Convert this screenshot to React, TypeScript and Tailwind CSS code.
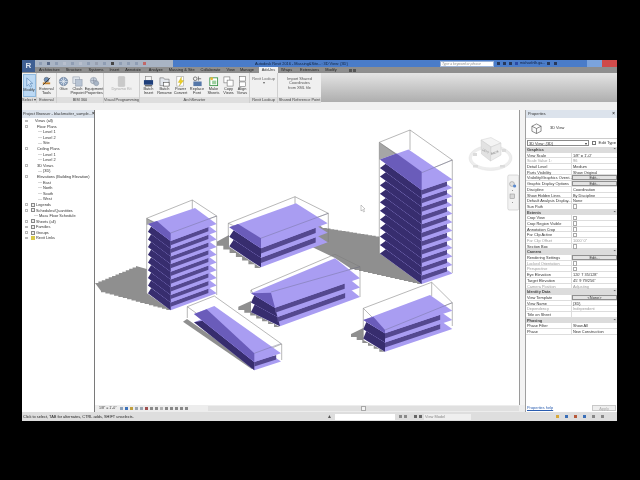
import React from "react";

type Pt = [number, number];
const S = (p: Pt[]) => p.map((q) => q.map((v) => v.toFixed(1)).join(",")).join(" ");
const LIGHT = "#a99df2";
const MED = "#6a5cba";
const NAVY = "#372d6e";
const STRIPE = "#54488f";
const GRAY = "#8f8f8f";
const WIRE = "#7d7d7d";

function stairs(a: Pt, b: Pt, n: number): Pt[] {
  const out: Pt[] = [];
  for (let i = 0; i < n; i++) {
    const x1 = a[0] + ((b[0] - a[0]) * i) / n;
    const y1 = a[1] + ((b[1] - a[1]) * i) / n;
    const x2 = a[0] + ((b[0] - a[0]) * (i + 1)) / n;
    const y2 = a[1] + ((b[1] - a[1]) * (i + 1)) / n;
    out.push([x1, y1], [x2, y1], [x2, y2]);
  }
  return out;
}

function Building(props: {
  L: Pt; B: Pt; R: Pt; F: Pt; h: number; n: number;
  s1: Pt; s2: Pt; wire: Pt[][]; over: Pt[][]; dF?: number; fill?: Pt[];
}) {
  const { L, B, R, F, h, n, s1, s2, wire, over, dF = 0, fill } = props;
  const plates = [];
  for (let k = n - 1; k >= 0; k--) {
    const o = k * h;
    const f: Pt = [F[0] + k * dF, F[1] + o];
    const l: Pt = [L[0], L[1] + o];
    const r: Pt = [R[0], R[1] + o];
    const b: Pt = [B[0], B[1] + o];
    const fu: Pt = [f[0] - dF, f[1] - h];
    const lu: Pt = [l[0], l[1] - h];
    const ru: Pt = [r[0], r[1] - h];
    const notch: Pt = [lu[0] + (fu[0] - lu[0]) * 0.14, lu[1] + (fu[1] - lu[1]) * 0.14];
    const e: Pt = [fu[0] + (ru[0] - fu[0]) * 0.82, fu[1] + (ru[1] - fu[1]) * 0.82];
    plates.push(
      <g key={k}>
        <polygon points={S([l, b, r, f])} fill={LIGHT} />
        {k > 0 && <polygon points={S([l, notch, fu, f])} fill={NAVY} />}
        {k > 0 && (
          <polygon
            points={S([fu, e, [e[0], e[1] + h * 0.55], [fu[0], fu[1] + h * 0.55]])}
            fill={STRIPE}
          />
        )}
      </g>
    );
  }
  return (
    <g>
      {fill && <polygon points={S(fill)} fill="#a6a6a6" />}
      {wire.map((w, i) => (
        <polyline key={i} points={S(w)} fill="none" stroke={WIRE} strokeWidth="0.55" />
      ))}
      {plates}
      <polygon points={S([L, s1, s2, F])} fill={MED} />
      {over.map((w, i) => (
        <polyline key={i} points={S(w)} fill="none" stroke="#6a6a8a" strokeWidth="0.4" />
      ))}
    </g>
  );
}

function Model() {
  const shadowA: Pt[] = [
    ...stairs([95, 283], [136, 266], 12),
    [146.7, 269], [146.7, 293], [170.7, 310],
    ...stairs([170.7, 310], [101, 291], 16),
  ];
  const shadowB: Pt[] = [[216.7, 241.7], [229, 235], [229, 246.7], [261, 268], ...stairs([261, 268], [217, 242], 7)];
  const shadowC: Pt[] = [
    [318, 224],
    ...stairs([323, 228], [379.5, 237], 15),
    [379.5, 253], [421.7, 284],
    ...stairs([421.7, 284], [350, 268], 16),
    [335, 258], [310, 246],
  ];
  const shadowD: Pt[] = [[238.3, 306.7], [251, 301], [251, 312], [280, 327], ...stairs([280, 327], [238.3, 307], 7)];
  const shadowE: Pt[] = [[183, 321.7], [187, 319], [254, 366], [251.7, 369]];
  const shadowF: Pt[] = [[351, 334], [363.3, 328], [363.3, 340], [385, 351.7], ...stairs([385, 351.7], [351, 334], 6)];

  return (
    <svg viewBox="95 110 424 295" className="block w-[424px] h-[295px] bg-white">
      {[shadowA, shadowB, shadowC, shadowD, shadowE, shadowF].map((s, i) => (
        <polygon key={i} points={S(s)} fill={GRAY} />
      ))}

      {/* Tower A */}
      <Building
        L={[148, 224]} B={[195, 208]} R={[216.7, 224]} F={[170.7, 241]} h={7.7} n={10}
        s1={[157, 221]} s2={[170.7, 233]}
        fill={[[146.7, 218.3], [155, 222], [146.7, 225]]}
        wire={[
          [[146.7, 218.3], [192.3, 200], [216.7, 216], [170.7, 233], [146.7, 218.3]],
          [[146.7, 218.3], [146.7, 293]],
          [[216.7, 216], [216.7, 295]],
          [[192.3, 200], [192.3, 209]],
        ]}
        over={[[[170.7, 233], [216.7, 216]]]}
      />

      {/* Block B */}
      <Building
        L={[229.3, 227.3]} B={[296, 203.3]} R={[327.7, 223.3]} F={[261, 248.3]} h={9.5} n={3}
        s1={[238, 224]} s2={[261, 238.3]}
        wire={[
          [[228.3, 223.3], [295, 196.7], [328.3, 213.3], [260.7, 238.3], [228.3, 223.3]],
          [[228.3, 223.3], [228.3, 237]],
          [[328.3, 213.3], [328.3, 242]],
          [[295, 196.7], [295, 204]],
        ]}
        over={[[[260.7, 238.3], [328.3, 213.3]]]}
      />

      {/* Tower C */}
      <Building
        L={[380, 159.5]} B={[408.5, 149.5]} R={[452.5, 179.5]} F={[421.7, 190]} h={8.55} n={12}
        s1={[396.5, 153.5]} s2={[421.7, 171.7]}
        fill={[[379.3, 142.3], [396.5, 153.5], [380, 159.5], [379.3, 159.5]]}
        wire={[
          [[379.3, 142.3], [410, 130], [452.3, 160], [421.7, 172.7], [379.3, 142.3]],
          [[379.3, 142.3], [379.3, 253]],
          [[452.3, 160], [452.3, 273]],
          [[410, 130], [410, 150]],
        ]}
        over={[[[421.7, 172.7], [452.3, 160]]]}
      />

      {/* Skew block D */}
      <Building
        L={[251, 293.3]} B={[335, 258.3]} R={[360, 278.3]} F={[275, 307.7]} h={9.3} n={3} dF={2.5}
        s1={[271, 292.7]} s2={[275, 307.7]}
        wire={[
          [[251, 290], [335, 254.3], [360, 266.7], [254, 295], [251, 290]],
          [[360, 266.7], [360, 297]],
          [[251, 290], [251, 293]],
        ]}
        over={[[[271, 292], [360, 266.7]]]}
      />

      {/* Long block E */}
      <Building
        L={[194, 314]} B={[214.3, 306]} R={[281, 353.3]} F={[254.3, 362]} h={8.3} n={2}
        s1={[206.7, 309.3]} s2={[254.3, 353.3]}
        wire={[
          [[187.3, 306.7], [214.3, 296], [281.7, 344], [254.3, 355], [187.3, 306.7]],
          [[187.3, 306.7], [187.3, 318]],
          [[281.7, 344], [281.7, 360]],
        ]}
        over={[[[254.3, 353.3], [281, 343.5]]]}
      />

      {/* Block F */}
      <Building
        L={[363.3, 320]} B={[430, 295]} R={[452.3, 310.7]} F={[385, 333.3]} h={9.2} n={3}
        s1={[373.3, 316.7]} s2={[385, 330]}
        wire={[
          [[363.3, 308.3], [431.7, 282.3], [452.3, 302.7], [385, 330], [363.3, 308.3]],
          [[363.3, 308.3], [363.3, 340]],
          [[452.3, 302.7], [452.3, 326]],
          [[431.7, 282.3], [431.7, 296]],
        ]}
        over={[[[385, 330], [452.3, 302.7]]]}
      />

      {/* cursor */}
      <polygon points="361,205 361,211 362.4,209.8 363.6,212 364.6,211.5 363.5,209.4 365,209" fill="#fff" stroke="#777" strokeWidth="0.4" />

      {/* ViewCube */}
      <ellipse cx="490.5" cy="158" rx="20" ry="11" fill="none" stroke="#ededed" strokeWidth="3" />
      <ellipse cx="490.5" cy="158" rx="21.5" ry="12.5" fill="none" stroke="#dcdcdc" strokeWidth="0.4" />
      <polygon points="481,140 491,137.5 501,143 491,147" fill="#f4f4f4" stroke="#c4c4c4" strokeWidth="0.4" />
      <polygon points="481,140 491,147 490.5,161 481.5,154" fill="#e2e2e2" stroke="#c4c4c4" strokeWidth="0.4" />
      <polygon points="491,147 501,143 501,155 490.5,161" fill="#ececec" stroke="#c4c4c4" strokeWidth="0.4" />
      <text x="495" y="153.5" fontSize="3" fontFamily="Liberation Sans" fill="#777" textAnchor="middle" transform="rotate(-20 495 153)">BACK</text>
      <text x="485" y="152" fontSize="3" fontFamily="Liberation Sans" fill="#888" textAnchor="middle" transform="rotate(35 485 152)">LEFT</text>
      <rect x="473" y="153" width="4" height="3" fill="#dcdcdc" />
      <rect x="502" y="149" width="4" height="3" fill="#dcdcdc" />
      <rect x="473" y="165" width="5" height="2.5" fill="#dcdcdc" />
      <rect x="500" y="165" width="5" height="2.5" fill="#dcdcdc" />

      {/* Navigation bar */}
      <rect x="507.8" y="175" width="11" height="35" rx="1.5" fill="#f2f2f2" stroke="#c4c4c4" strokeWidth="0.6" />
      <circle cx="512" cy="184" r="2.4" fill="#e2e2e2" stroke="#8a8a8a" strokeWidth="0.5" />
      <circle cx="514.6" cy="186" r="1.6" fill="#5b8bd0" />
      <rect x="510" y="194" width="4.5" height="4.5" fill="#d8d8d8" stroke="#8a8a8a" strokeWidth="0.5" />
      <rect x="512" y="190" width="1" height="1" fill="#999" />
      <rect x="512" y="202" width="1" height="1" fill="#999" />
    </svg>
  );
}

const Sm = ({ c, className = "" }: { c: string; className?: string }) => (
  <span className={"inline-block w-[3px] h-[3px] shrink-0 " + className} style={{ background: c }} />
);

function ToolIcon({ kind }: { kind: number }) {
  const g = "#8c97a8";
  return (
    <svg viewBox="0 0 12 12" className="w-[11px] h-[11px] shrink-0">
      {kind === 0 && <path d="M3 1 L3 10 L5 8 L7 11 L8.5 10 L6.5 7 L9.5 7 Z" fill="#cfe3f7" stroke="#5b86b5" strokeWidth="0.7" />}
      {kind === 1 && (
        <g>
          <circle cx="6" cy="4" r="2.6" fill="#6d8fb8" stroke="#444" strokeWidth="0.5" />
          <rect x="2" y="7" width="8" height="2" fill="#c8852e" />
          <path d="M2 10 L10 2" stroke="#333" strokeWidth="0.9" />
        </g>
      )}
      {kind === 2 && (
        <g>
          <circle cx="6" cy="6" r="4.6" fill="#8aa0bd" stroke="#5c6f88" strokeWidth="0.5" />
          <path d="M1.5 6 H10.5 M6 1.5 V10.5 M3 3 L9 9 M9 3 L3 9" stroke="#e8eef5" strokeWidth="0.7" />
        </g>
      )}
      {kind === 3 && (
        <g>
          <rect x="1" y="1" width="7" height="7" fill="#dfe5ec" stroke={g} strokeWidth="0.6" />
          <rect x="4" y="4" width="7" height="7" fill="#b8c4d4" stroke={g} strokeWidth="0.6" />
        </g>
      )}
      {kind === 4 && (
        <g>
          <circle cx="5" cy="5" r="3.5" fill="#c9d2dd" stroke={g} strokeWidth="0.7" />
          <circle cx="8" cy="8" r="2.6" fill="#a8b5c6" stroke={g} strokeWidth="0.7" />
          <path d="M2 5 H8 M5 2 V8" stroke="#6d7a8c" strokeWidth="0.5" />
        </g>
      )}
      {kind === 5 && <rect x="2.5" y="0.5" width="7" height="11" rx="1" fill="#c9c9c9" stroke="#bbb" strokeWidth="0.5" />}
      {kind === 6 && (
        <g>
          <rect x="2.5" y="0.5" width="6.5" height="4.5" fill="#f5f5f5" stroke="#777" strokeWidth="0.6" />
          <rect x="1" y="4.5" width="10" height="5" fill="#1f3f7a" />
          <rect x="2" y="10" width="8" height="1.3" fill="#555" />
        </g>
      )}
      {kind === 7 && (
        <g>
          <path d="M1 2 H5 L6 3.5 H11 V10.5 H1 Z" fill="#e2e6ec" stroke="#666" strokeWidth="0.6" />
          <rect x="5" y="7" width="6" height="4" fill="#fff" stroke="#444" strokeWidth="0.6" />
        </g>
      )}
      {kind === 8 && (
        <g>
          <rect x="2" y="0.5" width="7.5" height="10.5" fill="#fff" stroke="#999" strokeWidth="0.6" />
          <path d="M7 1 L3.5 7 H6 L4.5 11 L9.5 5 H7 Z" fill="#f2d21e" stroke="#a89212" strokeWidth="0.3" />
        </g>
      )}
      {kind === 9 && (
        <g>
          <circle cx="3.5" cy="3" r="2" fill="none" stroke="#555" strokeWidth="0.8" />
          <path d="M7 0.5 V5 M7 3 H10" stroke="#555" strokeWidth="0.8" fill="none" />
          <rect x="1.5" y="6" width="9" height="5" fill="#5577a8" />
        </g>
      )}
      {kind === 10 && (
        <g>
          <rect x="2" y="2" width="8.5" height="8.5" fill="#fff" stroke="#2f8f3f" strokeWidth="0.9" />
          <circle cx="4" cy="3" r="1.6" fill="#e8b838" />
          <rect x="4.5" y="5" width="4.5" height="4" fill="#9ad09f" />
        </g>
      )}
      {kind === 11 && (
        <g>
          <rect x="1" y="1" width="6.5" height="6.5" fill="#fff" stroke="#666" strokeWidth="0.6" />
          <rect x="4.5" y="4.5" width="6.5" height="6.5" fill="#fff" stroke="#666" strokeWidth="0.6" />
        </g>
      )}
      {kind === 12 && (
        <g>
          <rect x="2.5" y="0.5" width="7" height="5" fill="#fff" stroke="#666" strokeWidth="0.6" />
          <rect x="2.5" y="6.5" width="7" height="5" fill="#fff" stroke="#666" strokeWidth="0.6" />
        </g>
      )}
    </svg>
  );
}

function Tool({ kind, label, w, active, disabled }: { kind: number; label: string[]; w: string; active?: boolean; disabled?: boolean }) {
  return (
    <div
      className={
        "flex flex-col items-center shrink-0 pt-[2px] h-[23px] " + w + " " +
        (active ? "bg-[#bcd9f4] border border-[#8fb9de] " : "") +
        (disabled ? "text-[#aaaaaa]" : "text-[#333333]")
      }
    >
      <ToolIcon kind={kind} />
      {label.map((t) => (
        <span key={t} className="text-[3.9px] leading-[4.4px] whitespace-nowrap">{t}</span>
      ))}
    </div>
  );
}

function Panel({ label, w, children, line = true }: { label: string; w: string; children: React.ReactNode; line?: boolean }) {
  return (
    <div className={"flex flex-col shrink-0 h-full " + w + (line ? " border-r border-[#cfcfcf]" : "")}>
      <div className="flex flex-1 justify-center items-start pt-[1px]">{children}</div>
      <div className="h-[6px] bg-[#dedede] text-[#444444] text-[3.9px] leading-[6px] text-center whitespace-nowrap">{label}</div>
    </div>
  );
}

const Ribbon = () => (
  <div className="h-[30px] flex bg-[#f0f0f0] shrink-0">
    <Panel label="Select ▾" w="w-[15px]"><Tool kind={0} label={["Modify"]} w="w-[13px]" active /></Panel>
    <Panel label="External" w="w-[20px]"><Tool kind={1} label={["External", "Tools"]} w="w-[18px]" /></Panel>
    <Panel label="BIM 360" w="w-[47px]">
      <Tool kind={2} label={["Glue"]} w="w-[13px]" />
      <Tool kind={3} label={["Clash", "Pinpoint"]} w="w-[15px]" />
      <Tool kind={4} label={["Equipment", "Properties"]} w="w-[18px]" />
    </Panel>
    <Panel label="Visual Programming" w="w-[36px]"><Tool kind={5} label={["Dynamo Kit"]} w="w-[26px]" disabled /></Panel>
    <Panel label="ArchSmarter" w="w-[110px]">
      <Tool kind={6} label={["Batch", "Insert"]} w="w-[16px]" />
      <Tool kind={7} label={["Batch", "Rename"]} w="w-[16px]" />
      <Tool kind={8} label={["Power", "Convert"]} w="w-[16px]" />
      <Tool kind={9} label={["Replace", "Font"]} w="w-[17px]" />
      <Tool kind={10} label={["Make", "Sheets"]} w="w-[16px]" />
      <Tool kind={11} label={["Copy", "Views"]} w="w-[14px]" />
      <Tool kind={12} label={["Align", "Views"]} w="w-[13px]" />
    </Panel>
    <Panel label="Revit Lookup" w="w-[28px]">
      <div className="flex flex-col items-center text-[#666666] text-[3.9px] leading-[4.4px] pt-[3px] whitespace-nowrap">
        <span>Revit Lookup</span><span>▾</span>
      </div>
    </Panel>
    <Panel label="Shared Reference Point" w="w-[43px]" line={false}>
      <div className="flex flex-col items-center text-[#555555] text-[3.9px] leading-[4.4px] pt-[3px] whitespace-nowrap">
        <span>Import Shared</span><span>Coordinates</span><span>from XML file</span>
      </div>
    </Panel>
    <div className="flex-1 h-[29px] bg-gradient-to-b from-[#e4e4e4] to-[#aeaeae]" />
  </div>
);

const TABS: [string, string][] = [
  ["Architecture", "ml-[17px]"], ["Structure", "ml-[6px]"], ["Systems", "ml-[7px]"], ["Insert", "ml-[6px]"],
  ["Annotate", "ml-[6px]"], ["Analyze", "ml-[8px]"], ["Massing & Site", "ml-[6px]"], ["Collaborate", "ml-[6px]"],
  ["View", "ml-[6px]"], ["Manage", "ml-[5px]"],
];

const Top = () => (
  <>
    <div className="h-[7px] flex items-center bg-[#4a7cc9] shrink-0 text-[3.9px] leading-[7px] text-[#10203a]">
      <div className="w-[13px] h-[12px] bg-[#3f5f92] text-[#dfe7f2] text-[8px] font-bold leading-[11px] text-center self-start z-10">R</div>
      <div className="w-[138px] h-full bg-[#a9b4c4] flex items-center gap-[5px] pl-[4px] text-[#444444]">
        {["#8f9db3", "#5a6a88", "#8f9db3", "#b8bfcd", "#8f9db3", "#b8bfcd", "#8f9db3", "#98a0b0", "#8f9db3", "#444444", "#8f9db3", "#8f9db3", "#8f9db3", "#c26868"].map((c, i) => (
          <Sm key={i} c={c} />
        ))}
      </div>
      <span className="ml-[82px] w-[103px] whitespace-nowrap">Autodesk Revit 2016 - Massing&amp;Site...: 3D View: {"{3D}"}</span>
      <div className="ml-[82px] w-[54px] h-[6px] bg-white border border-[#9db4d8] text-[#888888] italic text-[3.4px] leading-[4px] pl-[1px] whitespace-nowrap">Type a keyword or phrase</div>
      <Sm c="#27385a" className="ml-[3px]" />
      <Sm c="#27385a" className="ml-[3px]" />
      <Sm c="#27385a" className="ml-[3px]" />
      <Sm c="#2a49a5" className="ml-[3px]" />
      <span className="ml-[2px] w-[26px] whitespace-nowrap text-[3.6px] text-[#0d1a35]">michaelnlh.ga...</span>
      <Sm c="#27385a" className="ml-[1px]" />
      <Sm c="#27385a" className="ml-[4px]" />
      <div className="ml-auto w-[15px] h-full bg-[#7ba3dc]" />
      <div className="w-[15px] h-full bg-[#cf4a4a]" />
    </div>
    <div className="h-[6px] flex items-center bg-[#8e8e8e] shrink-0 text-[3.9px] leading-[6px] text-[#222222] whitespace-nowrap">
      {TABS.map(([t, m]) => (
        <span key={t} className={m}>{t}</span>
      ))}
      <span className="ml-[5px] w-[19px] h-full bg-[#f0f0f0] text-center text-[#333333]">Add-Ins</span>
      <span className="ml-[3px]">Wraps</span>
      <span className="ml-[8px]">Extensions</span>
      <span className="ml-[6px]">Modify</span>
      <Sm c="#555555" className="ml-[12px]" />
      <Sm c="#555555" className="ml-[1px]" />
    </div>
    <Ribbon />
    <div className="h-[7px] bg-[#f1f1f1] shrink-0" />
  </>
);

const TREE: [string, number, number][] = [
  ["Views (all)", 13, 1], ["Floor Plans", 15, 1], ["Level 1", 21, 0], ["Level 2", 21, 0], ["Site", 21, 0],
  ["Ceiling Plans", 15, 1], ["Level 1", 21, 0], ["Level 2", 21, 0], ["3D Views", 15, 1], ["{3D}", 21, 0],
  ["Elevations (Building Elevation)", 15, 1], ["East", 21, 0], ["North", 21, 0], ["South", 21, 0], ["West", 21, 0],
  ["Legends", 14, 2], ["Schedules/Quantities", 14, 3], ["Mass Floor Schedule", 17, 0], ["Sheets (all)", 14, 3],
  ["Families", 14, 3], ["Groups", 14, 3], ["Revit Links", 14, 4],
];

const Browser = () => (
  <div className="w-[73px] shrink-0 bg-white border-r border-[#7a7a7a] flex flex-col">
    <div className="h-[8px] bg-[#dce3ec] flex items-center justify-between px-[1px] text-[3.9px] text-[#333333] whitespace-nowrap">
      <span>Project Browser - blackmatter_sample...</span><span className="font-bold text-[4.5px]">×</span>
    </div>
    <div>
      {TREE.map(([t, x, ic], i) => (
        <div key={i} className="relative flex items-center h-[5.6px] text-[3.9px] leading-[5.6px] text-[#333333] whitespace-nowrap">
          {ic > 0 && <span className="absolute left-[3px] w-[2.5px] h-[2.5px] border-[0.4px] border-[#bbbbbb] top-[1.5px]" />}
          {ic === 0 && <span className="w-[4px] h-px bg-[#d8d8d8] mr-[1px]" style={{ marginLeft: x - 5 }} />}
          {ic > 0 && <span style={{ width: x - (ic > 1 ? 5 : 0) }} />}
          {ic > 1 && (
            <span className={"w-[4px] h-[4px] mr-[1px] " + (ic === 4 ? "bg-[#d8c84a]" : "bg-[#eeeeee] border-[0.5px] border-[#888888]")} />
          )}
          <span>{t}</span>
        </div>
      ))}
    </div>
  </div>
);

const ViewBar = () => (
  <div className="h-[7px] flex items-center bg-[#ededed] shrink-0 text-[#333333] text-[3.6px] whitespace-nowrap">
    <span className="ml-[4px] w-[21px]">1/8" = 1'-0"</span>
    <div className="flex gap-[2px] w-[88px] items-center">
      {["#8ca0b8", "#3d72bb", "#c0a040", "#9aa4b0", "#9aa4b0", "#a05050", "#8a8a8a", "#8a8a8a", "#b0b0b0", "#888888", "#888888", "#888888", "#888888", "#888888"].map((c, i) => (
        <Sm key={i} c={c} />
      ))}
    </div>
    <div className="flex-1 h-[5px] bg-[#e0e0e0] flex justify-center items-center mr-[6px]">
      <span className="w-[5px] h-[5px] bg-[#f4f4f4] border-[0.5px] border-[#a8a8a8]" />
    </div>
  </div>
);

type Row = { h?: string; n?: string; v?: string; dim?: boolean; cb?: boolean; btn?: boolean };
const ROWS: Row[] = [
  { h: "Graphics" },
  { n: "View Scale", v: '1/8" = 1\'-0"' },
  { n: "Scale Value    1:", v: "96", dim: true },
  { n: "Detail Level", v: "Medium" },
  { n: "Parts Visibility", v: "Show Original" },
  { n: "Visibility/Graphics Overri...", v: "Edit...", btn: true },
  { n: "Graphic Display Options", v: "Edit...", btn: true },
  { n: "Discipline", v: "Coordination" },
  { n: "Show Hidden Lines", v: "By Discipline" },
  { n: "Default Analysis Display...", v: "None" },
  { n: "Sun Path", cb: true },
  { h: "Extents" },
  { n: "Crop View", cb: true },
  { n: "Crop Region Visible", cb: true },
  { n: "Annotation Crop", cb: true },
  { n: "Far Clip Active", cb: true },
  { n: "Far Clip Offset", v: "1000' 0\"", dim: true },
  { n: "Section Box", cb: true },
  { h: "Camera" },
  { n: "Rendering Settings", v: "Edit...", btn: true },
  { n: "Locked Orientation", cb: true, dim: true },
  { n: "Perspective", cb: true, dim: true },
  { n: "Eye Elevation", v: "120' 7 35/128\"" },
  { n: "Target Elevation", v: "45' 9 79/256\"" },
  { n: "Camera Position", v: "Adjusting", dim: true },
  { h: "Identity Data" },
  { n: "View Template", v: "<None>", btn: true },
  { n: "View Name", v: "{3D}" },
  { n: "Dependency", v: "Independent", dim: true },
  { n: "Title on Sheet", v: "" },
  { h: "Phasing" },
  { n: "Phase Filter", v: "Show All" },
  { n: "Phase", v: "New Construction" },
];

const Properties = () => (
  <div className="w-[92px] shrink-0 bg-white flex flex-col border-l border-[#a0a0a0] text-[#333333]">
    <div className="h-[8px] bg-[#dce3ec] flex items-center justify-between px-[2px] text-[3.9px] whitespace-nowrap">
      <span>Properties</span><span className="font-bold text-[4.5px]">×</span>
    </div>
    <div className="h-[21px] flex items-center border-b border-[#cccccc] pl-[5px] gap-[8px] text-[3.9px]">
      <svg viewBox="0 0 12 12" className="w-[11px] h-[11px]">
        <path d="M6 1 L11 3.5 V9 L6 11.5 L1 9 V3.5 Z M1 3.5 L6 6 L11 3.5 M6 6 V11.5" fill="#fafafa" stroke="#555" strokeWidth="0.7" />
      </svg>
      <span>3D View</span>
    </div>
    <div className="h-[8px] flex items-center gap-[3px] px-[1px] text-[3.9px] whitespace-nowrap">
      <div className="w-[64px] h-[6px] border-[0.5px] border-[#8a8a8a] leading-[5.5px] pl-[1px] flex justify-between pr-[1px]">
        <span>3D View: {"{3D}"}</span><span>▾</span>
      </div>
      <span className="w-[4px] h-[4px] border-[0.5px] border-[#777777]" />
      <span className="text-[4.2px]">Edit Type</span>
    </div>
    <div className="flex flex-col">
      {ROWS.map((r, i) =>
        r.h ? (
          <div key={i} className="h-[5.7px] bg-[#dcdcdc] flex justify-between px-[1px] text-[3.9px] leading-[5.7px] font-bold text-[#444444]">
            <span>{r.h}</span><span>⌃</span>
          </div>
        ) : (
          <div key={i} className={"h-[5.7px] flex border-b-[0.4px] border-[#dddddd] text-[3.9px] leading-[5.3px] whitespace-nowrap " + (r.dim ? "text-[#9a9a9a]" : "")}>
            <span className="w-[46px] pl-[1px] border-r-[0.4px] border-[#dddddd]">{r.n}</span>
            {r.cb ? (
              <span className="ml-[1px] mt-[0.5px] w-[4.4px] h-[4.4px] border-[0.5px] border-[#aaaaaa]" />
            ) : r.btn ? (
              <span className="flex-1 bg-[#e3e3e3] border-[0.5px] border-[#8f8f8f] text-center leading-[4.4px]">{r.v}</span>
            ) : (
              <span className="pl-[1px]">{r.v}</span>
            )}
          </div>
        )
      )}
    </div>
    <div className="mt-auto h-[9px] flex items-center justify-between pl-[1px] pr-[1px] text-[3.9px]">
      <span className="text-[#2a5db0] underline">Properties help</span>
      <span className="w-[24px] h-[6px] bg-[#eeeeee] border-[0.5px] border-[#c8c8c8] text-center leading-[5px] text-[#aaaaaa]">Apply</span>
    </div>
  </div>
);

const Status = () => (
  <div className="h-[9px] flex items-center bg-[#dedede] shrink-0 text-[3.9px] text-[#222222] whitespace-nowrap">
    <span className="w-[305px] pl-[1px]">Click to select, TAB for alternates, CTRL adds, SHIFT unselects.</span>
    <span className="w-[8px] text-[#555555] text-[5px]">▲</span>
    <div className="w-[60px] h-[6px] bg-white" />
    <Sm c="#8a8a8a" className="ml-[4px]" />
    <Sm c="#8a8a8a" className="ml-[2px]" />
    <Sm c="#666666" className="ml-[7px]" />
    <Sm c="#666666" className="ml-[2px]" />
    <div className="ml-[2px] w-[47px] h-[6px] bg-[#efefef] text-[#888888] leading-[6px] pl-[1px]">View Model</div>
    <div className="ml-auto flex items-center gap-[2px] pr-[13px]">
      {["#d8a83a", "#3a6fb8", "#b85a3a", "#3a6fb8", "#888888", "#888888"].map((c, i) => (
        <Sm key={i} c={c} className="ml-[4px]" />
      ))}
    </div>
  </div>
);

export default function App() {
  return (
    <div className="w-[640px] h-[480px] bg-black overflow-hidden pt-[60px] pl-[22px] pr-[23px] pb-[59px] [font-family:'Liberation_Sans',Arial,sans-serif] blur-[0.3px]">
      <div className="h-full flex flex-col bg-[#f0f0f0]">
        <Top />
        <div className="flex flex-1 min-h-0">
          <Browser />
          <div className="w-[430px] shrink-0 flex flex-col">
            <div className="flex">
              <Model />
              <div className="w-[6px] bg-[#f3f3f3] border-l border-[#9a9a9a]" />
            </div>
            <ViewBar />
          </div>
          <Properties />
        </div>
        <Status />
      </div>
    </div>
  );
}
